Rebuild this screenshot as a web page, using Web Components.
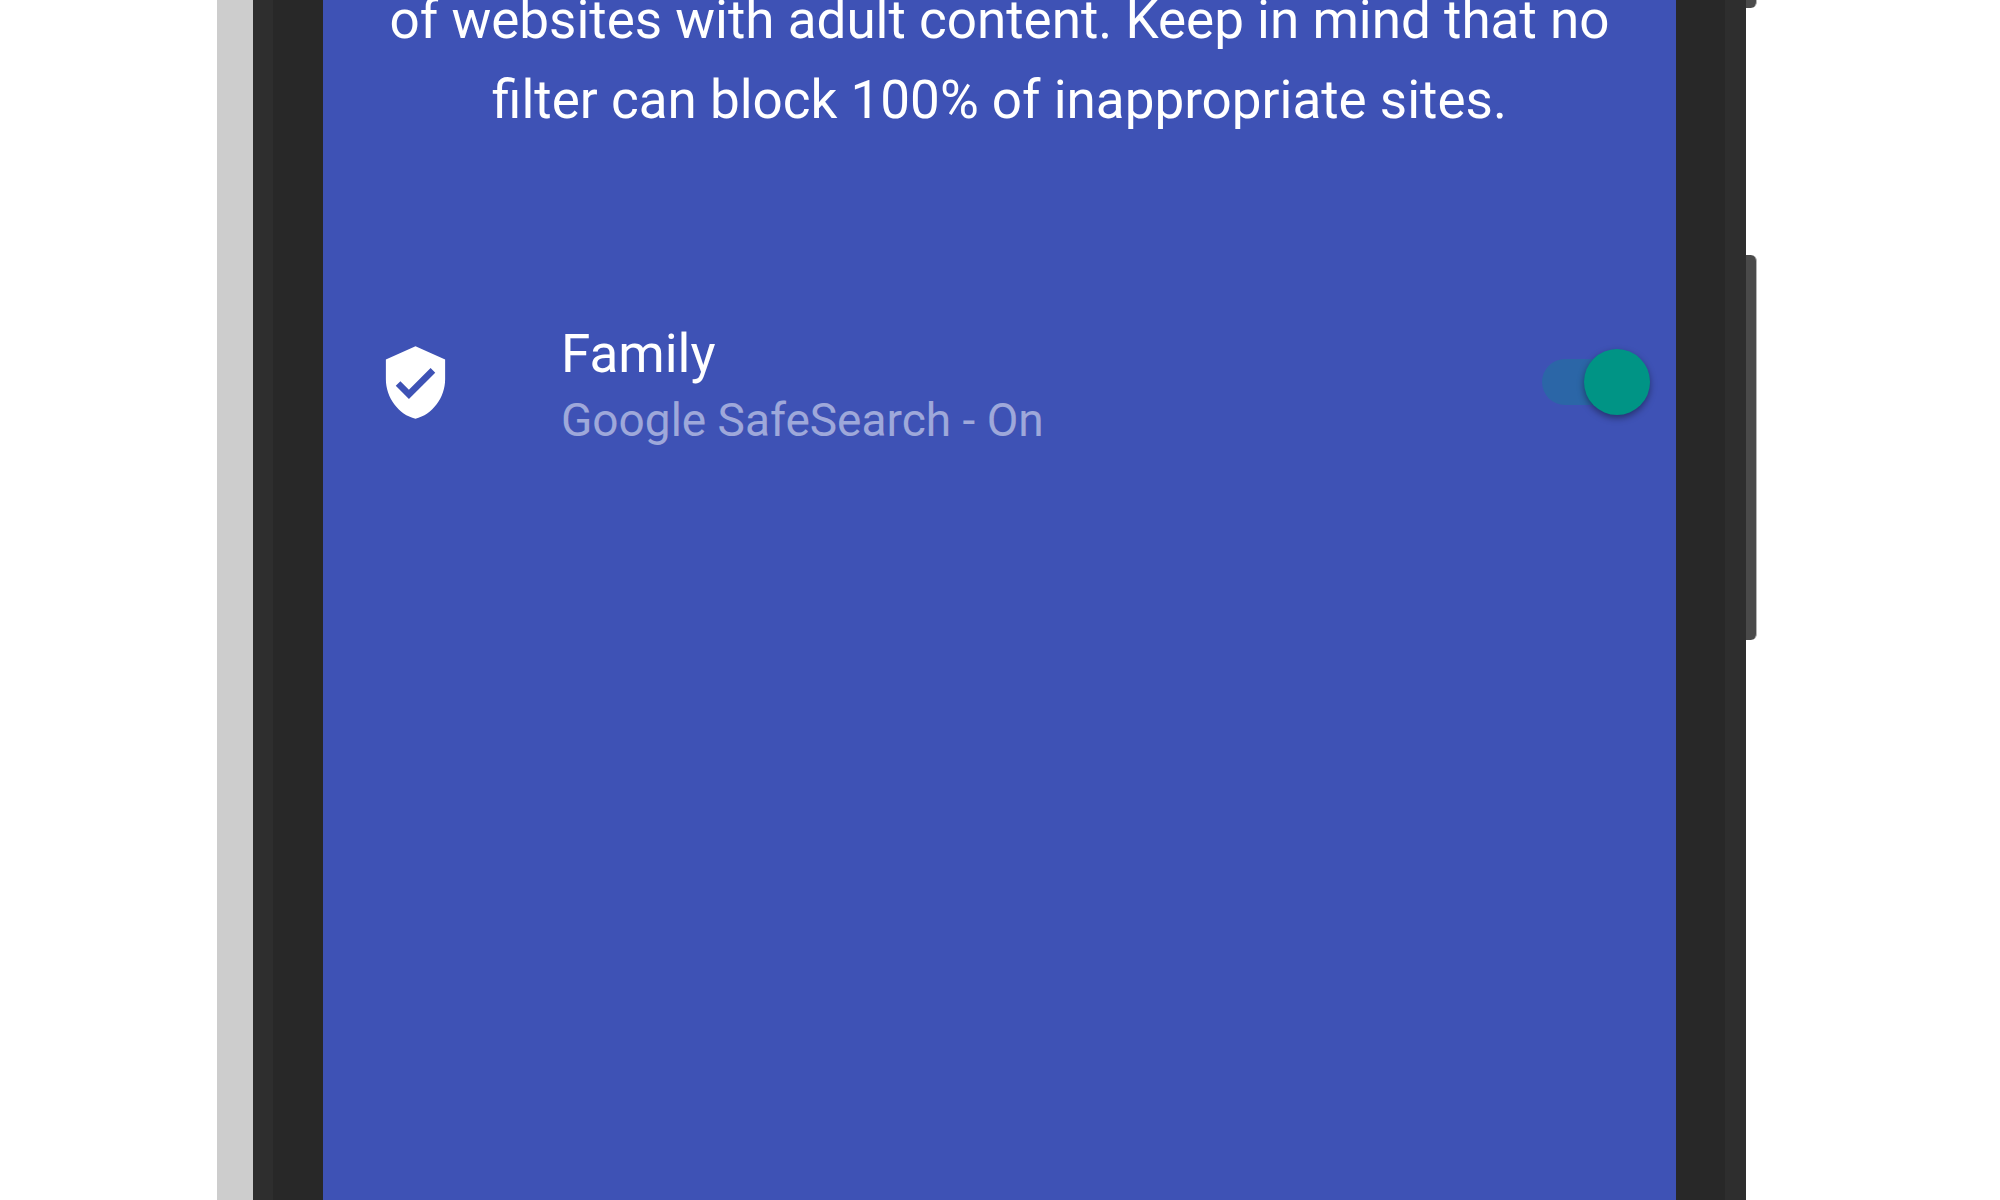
<!DOCTYPE html>
<html lang="en">
<head>
<meta charset="utf-8">
<meta name="viewport" content="width=device-width, initial-scale=1">
<title>Family filter</title>
<style>
    body {
        margin: 0;
        height: 100vh;
        overflow: hidden;
        background: #fff;
        font-family: Roboto, "Noto Sans", sans-serif;
    }
</style>
</head>
<body>
<phone-frame>
    <filter-intro>of websites with adult content. Keep in mind that no filter can block 100% of inappropriate sites.</filter-intro>
    <setting-row>
        <shield-icon slot="icon"></shield-icon>
        <span slot="title">Family</span>
        <span slot="summary">Google SafeSearch - On</span>
        <toggle-switch slot="control" label="Family" checked></toggle-switch>
    </setting-row>
</phone-frame>

<template id="phone-frame">
    <style>
        :host {
            display: flex;
            box-sizing: border-box;
            min-height: calc(100vh + 20px);
            margin-top: -20px;
            padding: 0 243px 0 217px;
        }
        .edge {
            width: 36px;
            background: #cdcdcd;
        }
        .bezel {
            display: flex;
            flex: 1;
            border: solid #2e2e2e;
            border-width: 0 21px 0 20px;
            background: #282828;
            padding: 0 49px 0 50px;
        }
        .screen {
            flex: 1;
            background: #3e52b5;
            color: #fff;
        }
        .keys {
            display: flex;
            flex-direction: column;
            gap: 247px;
            width: 11px;
        }
        .key {
            box-sizing: border-box;
            border-right: 1px solid #b4b4b4;
            border-radius: 0 6px 6px 0;
            background: #4a4a4a;
        }
        .power {
            height: 28px;
        }
        .volume {
            height: 385px;
        }
    </style>
    <div class="edge"></div>
    <div class="bezel">
        <main class="screen"><slot></slot></main>
    </div>
    <div class="keys">
        <div class="key power"></div>
        <div class="key volume"></div>
    </div>
</template>

<template id="filter-intro">
    <style>
        :host {
            display: block;
            padding: 0 53px;
            text-align: center;
        }
        p {
            margin: 0;
            font-size: 53px;
            line-height: 80px;
        }
    </style>
    <p><slot></slot></p>
</template>

<template id="setting-row">
    <style>
        :host {
            display: flex;
            align-items: center;
            margin-top: 176px;
            padding: 0 26px 0 53px;
        }
        .text {
            flex: 1;
            margin-left: 106px;
        }
        .title {
            font-size: 53px;
            line-height: 76px;
        }
        .summary {
            font-size: 46px;
            line-height: 56px;
            color: rgba(255, 255, 255, 0.5);
        }
    </style>
    <slot name="icon"></slot>
    <div class="text">
        <div class="title"><slot name="title"></slot></div>
        <div class="summary"><slot name="summary"></slot></div>
    </div>
    <slot name="control"></slot>
</template>

<template id="shield-icon">
    <style>
        :host {
            display: block;
            width: 79px;
            height: 79px;
        }
        svg {
            display: block;
            width: 100%;
            height: 100%;
        }
    </style>
    <svg viewBox="0 0 24 24" fill="currentColor" aria-hidden="true">
        <path d="M12 1L3 5v6c0 5.55 3.84 10.74 9 12 5.16-1.26 9-6.45 9-12V5l-9-4zm-2 16l-4-4 1.41-1.41L10 14.17l6.59-6.59L18 9l-8 8z"/>
    </svg>
</template>

<template id="toggle-switch">
    <style>
        :host {
            display: block;
        }
        label {
            display: flex;
            align-items: center;
            width: 108px;
            height: 66px;
            cursor: pointer;
        }
        input {
            appearance: none;
            display: flex;
            align-items: center;
            width: 108px;
            height: 46px;
            margin: 0;
            border-radius: 23px;
            background: rgba(255, 255, 255, 0.3);
            cursor: pointer;
        }
        input::before {
            content: "";
            width: 66px;
            height: 66px;
            border-radius: 50%;
            background: #fafafa;
            box-shadow: 0 3px 7px rgba(0, 0, 0, 0.4);
        }
        input:checked {
            justify-content: flex-end;
            background: rgba(0, 150, 136, 0.3);
        }
        input:checked::before {
            background: #009485;
        }
    </style>
    <label><input type="checkbox" role="switch"></label>
</template>

<script>
    class TemplateElement extends HTMLElement {
        constructor() {
            super();
            const template = document.getElementById(this.localName);
            this.attachShadow({ mode: 'open' });
            this.shadowRoot.appendChild(template.content.cloneNode(true));
        }
    }

    class PhoneFrame extends TemplateElement {}
    class FilterIntro extends TemplateElement {}
    class SettingRow extends TemplateElement {}
    class ShieldIcon extends TemplateElement {}

    class ToggleSwitch extends TemplateElement {
        static get observedAttributes() {
            return ['checked', 'label'];
        }

        attributeChangedCallback(name, oldValue, newValue) {
            const input = this.shadowRoot.querySelector('input');
            switch (name) {
                case 'checked':
                    input.checked = newValue !== null;
                    break;
                case 'label':
                    input.setAttribute('aria-label', newValue || '');
                    break;
            }
        }
    }

    window.customElements.define('phone-frame', PhoneFrame);
    window.customElements.define('filter-intro', FilterIntro);
    window.customElements.define('setting-row', SettingRow);
    window.customElements.define('shield-icon', ShieldIcon);
    window.customElements.define('toggle-switch', ToggleSwitch);
</script>
</body>
</html>
